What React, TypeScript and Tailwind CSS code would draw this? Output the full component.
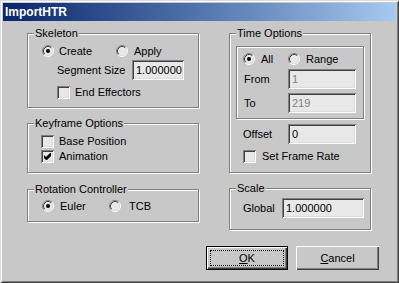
import type { ReactNode } from "react";

const SUNKEN = "shadow-[inset_1px_1px_0_#808080,inset_-1px_-1px_0_#fff,inset_2px_2px_0_#404040,inset_-2px_-2px_0_#dcdcdc]";

export default function App() {
  return (
    <div className="flex h-[283px] w-[399px] flex-col bg-[#c8c8c8] p-[3px] font-['Liberation_Sans',Arial,sans-serif] text-[11px] leading-[13px] text-black shadow-[inset_1px_1px_0_#dcdcdc,inset_-1px_-1px_0_#404040,inset_2px_2px_0_#fff,inset_-2px_-2px_0_#808080]">
      {/* title bar */}
      <div className="flex h-[18px] shrink-0 items-center bg-gradient-to-r from-[#0a246a] to-[#a6caf0] pl-[2px] text-[12px] font-bold text-white">
        ImportHTR
      </div>

      <div className="flex flex-1 flex-col pl-[24px] pr-[17px]">
        <div className="mt-[12px] flex gap-[30px]">
          {/* left column */}
          <div className="flex w-[172px] flex-col">
            <Group title="Skeleton" className="h-[75px]">
              <div className="flex flex-col pl-[14px] pt-[11px]">
                <div className="flex h-[12px] items-center">
                  <div className="flex w-[74px] items-center">
                    <Radio on />
                    <span className="ml-[5px]">Create</span>
                  </div>
                  <Radio />
                  <span className="ml-[6px]">Apply</span>
                </div>
                <div className="mt-[3px] flex items-center pl-[15px]">
                  <span className="w-[75px]">Segment Size</span>
                  <Field value="1.000000" className="w-[52px]" />
                </div>
                <div className="mt-[6px] flex items-center pl-[15px]">
                  <Check />
                  <span className="ml-[5px]">End Effectors</span>
                </div>
              </div>
            </Group>

            <Group title="Keyframe Options" className="mt-[15px] h-[50px]">
              <div className="flex flex-col pl-[13px] pt-[11px]">
                <div className="flex items-center">
                  <Check />
                  <span className="ml-[5px]">Base Position</span>
                </div>
                <div className="mt-[2px] flex items-center">
                  <Check on />
                  <span className="ml-[5px]">Animation</span>
                </div>
              </div>
            </Group>

            <Group title="Rotation Controller" className="mt-[16px] h-[33px]">
              <div className="flex h-[12px] items-center pl-[14px] mt-[10px]">
                <div className="flex w-[67px] items-center">
                  <Radio on />
                  <span className="ml-[6px]">Euler</span>
                </div>
                <Radio />
                <span className="ml-[8px]">TCB</span>
              </div>
            </Group>
          </div>

          {/* right column */}
          <div className="flex w-[142px] flex-col">
            <Group title="Time Options" className="h-[140px]">
              <div className="ml-[6px] mt-[12px] h-[73px] w-[128px] border border-[#808080] shadow-[1px_1px_0_#fff,inset_1px_1px_0_#fff]">
                <div className="flex flex-col pl-[6px] pt-[6px]">
                  <div className="flex h-[12px] items-center">
                    <div className="flex w-[45px] items-center">
                      <Radio on />
                      <span className="ml-[6px]">All</span>
                    </div>
                    <Radio />
                    <span className="ml-[6px]">Range</span>
                  </div>
                  <div className="mt-[4px] flex items-center pl-[1px]">
                    <span className="w-[44px]">From</span>
                    <Field value="1" disabled className="w-[68px]" />
                  </div>
                  <div className="mt-[4px] flex items-center pl-[1px]">
                    <span className="w-[44px]">To</span>
                    <Field value="219" disabled className="w-[68px]" />
                  </div>
                </div>
              </div>
              <div className="mt-[5px] flex items-center pl-[13px]">
                <span className="w-[45px]">Offset</span>
                <Field value="0" className="w-[68px]" />
              </div>
              <div className="mt-[6px] flex items-center pl-[13px]">
                <Check />
                <span className="ml-[6px]">Set Frame Rate</span>
              </div>
            </Group>

            <Group title="Scale" className="mt-[15px] h-[42px]">
              <div className="flex items-center pl-[13px] pt-[9px]">
                <span className="w-[39px]">Global</span>
                <Field value="1.000000" className="w-[82px]" />
              </div>
            </Group>
          </div>
        </div>

        {/* buttons */}
        <div className="mt-[16px] flex justify-end gap-[8px]">
          <button className="relative flex h-[24px] w-[82px] items-center justify-center border border-black shadow-[inset_1px_1px_0_#fff,inset_-1px_-1px_0_#404040,inset_-2px_-2px_0_#808080]">
            <span className="pointer-events-none absolute inset-[3px] border border-dotted border-black" />
            <span><u className="underline-offset-1">O</u>K</span>
          </button>
          <button className="flex h-[24px] w-[83px] items-center justify-center shadow-[inset_1px_1px_0_#fff,inset_-1px_-1px_0_#404040,inset_-2px_-2px_0_#808080]">
            <span><u className="underline-offset-1">C</u>ancel</span>
          </button>
        </div>
      </div>
    </div>
  );
}

function Group({ title, className, children }: { title: string; className?: string; children: ReactNode }) {
  return (
    <div className={`relative border border-[#808080] shadow-[1px_1px_0_#fff,inset_1px_1px_0_#fff] ${className ?? ""}`}>
      <span className="absolute -top-[7px] left-[6px] bg-[#c8c8c8] px-[1px] leading-[13px]">{title}</span>
      {children}
    </div>
  );
}

function Field({ value, disabled, className }: { value: string; disabled?: boolean; className?: string }) {
  return (
    <div className={`flex h-[20px] items-center bg-[#e8e8e8] pl-[4px] ${SUNKEN} ${disabled ? "text-[#808080]" : ""} ${className ?? ""}`}>
      {value}
    </div>
  );
}

function Radio({ on }: { on?: boolean }) {
  return (
    <svg width="12" height="12" viewBox="0 0 12 12" className="shrink-0">
      <circle cx="6" cy="6" r="5" fill="#e8e8e8" />
      <path d="M2.11 9.89A5.5 5.5 0 0 1 9.89 2.11" fill="none" stroke="#808080" />
      <path d="M9.89 2.11A5.5 5.5 0 0 1 2.11 9.89" fill="none" stroke="#fff" />
      <path d="M2.82 9.18A4.5 4.5 0 0 1 9.18 2.82" fill="none" stroke="#404040" />
      <path d="M9.18 2.82A4.5 4.5 0 0 1 2.82 9.18" fill="none" stroke="#dcdcdc" />
      {on && <circle cx="6" cy="6" r="2" fill="#000" />}
    </svg>
  );
}

function Check({ on }: { on?: boolean }) {
  return (
    <span className={`flex h-[13px] w-[13px] shrink-0 items-center justify-center bg-[#e8e8e8] ${SUNKEN}`}>
      {on && (
        <svg width="7" height="7" viewBox="0 0 7 7">
          <polygon points="0,2 2,4 6,0 7,0 7,3 3,7 2,7 0,5" fill="#000" />
        </svg>
      )}
    </span>
  );
}
